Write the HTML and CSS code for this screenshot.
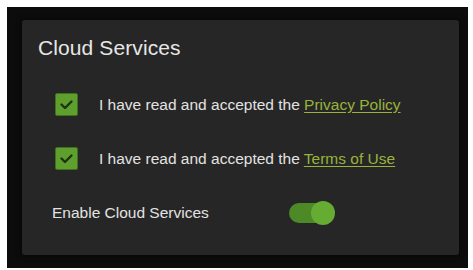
FILE: index.html
```html
<!DOCTYPE html>
<html>
<head>
<meta charset="utf-8">
<link rel="stylesheet" href="styles.css">
</head>
<body>
<div class="frame">
  <div class="card">
    <h1 class="title">Cloud Services</h1>
    <div class="checks">
      <label class="check-row">
        <span class="box"><svg viewBox="0 0 23 23" width="23" height="23"><path d="M6.5 11.5l3.5 3.5 6.5-6.5" fill="none" stroke="#1c3510" stroke-width="2.4" stroke-linecap="round" stroke-linejoin="round"/></svg></span>
        <span class="check-text">I have read and accepted the <a class="link">Privacy Policy</a></span>
      </label>
      <label class="check-row">
        <span class="box"><svg viewBox="0 0 23 23" width="23" height="23"><path d="M6.5 11.5l3.5 3.5 6.5-6.5" fill="none" stroke="#1c3510" stroke-width="2.4" stroke-linecap="round" stroke-linejoin="round"/></svg></span>
        <span class="check-text">I have read and accepted the <a class="link">Terms of Use</a></span>
      </label>
    </div>
    <div class="enable-row">
      <span class="enable-label">Enable Cloud Services</span>
      <span class="toggle"><span class="knob"></span></span>
    </div>
  </div>
</div>
</body>
</html>
```
FILE: styles.css
```css
html, body {
  margin: 0;
  padding: 0;
  background: #ffffff;
}
body {
  padding: 7px 5px 2px 7px;
  font-family: "Liberation Sans", Arial, sans-serif;
}
.frame {
  width: 461px;
  height: 261px;
  box-sizing: border-box;
  background: #0c0c0c;
  padding: 13px 9px 13px 15px;
}
.card {
  height: 100%;
  box-sizing: border-box;
  background: #262626;
  border-radius: 3px;
  box-shadow: 0 0 6px rgba(0,0,0,0.6);
  padding: 16px 0 0 16px;
}
.title {
  margin: 0;
  font-weight: normal;
  font-size: 21px;
  line-height: 24px;
  color: #e6e6e6;
  letter-spacing: 0.1px;
}
.checks {
  display: flex;
  flex-direction: column;
  gap: 31px;
  margin-top: 33px;
  padding-left: 17px;
}
.check-row {
  display: flex;
  align-items: center;
  gap: 21px;
  height: 23px;
}
.box {
  width: 23px;
  height: 23px;
  box-sizing: border-box;
  border-radius: 2px;
  background: #5f9f2e;
  border: 1px solid #3f7020;
  display: flex;
  align-items: center;
  justify-content: center;
}
.box svg {
  display: block;
  margin: -1px;
}
.check-text {
  font-size: 15.5px;
  color: #e2e2e2;
  line-height: 20px;
}
.link {
  color: #98b33c;
  text-decoration: underline;
  text-underline-offset: 2px;
}
.enable-row {
  display: flex;
  align-items: center;
  margin-top: 30px;
  padding-left: 14px;
  height: 26px;
}
.enable-label {
  width: 237px;
  font-size: 15.5px;
  color: #e2e2e2;
}
.toggle {
  position: relative;
  width: 42px;
  height: 20px;
  border-radius: 10px;
  background: #4d8a27;
}
.knob {
  position: absolute;
  right: -4px;
  top: -2px;
  width: 24px;
  height: 24px;
  border-radius: 50%;
  background: #66ab32;
}
```
